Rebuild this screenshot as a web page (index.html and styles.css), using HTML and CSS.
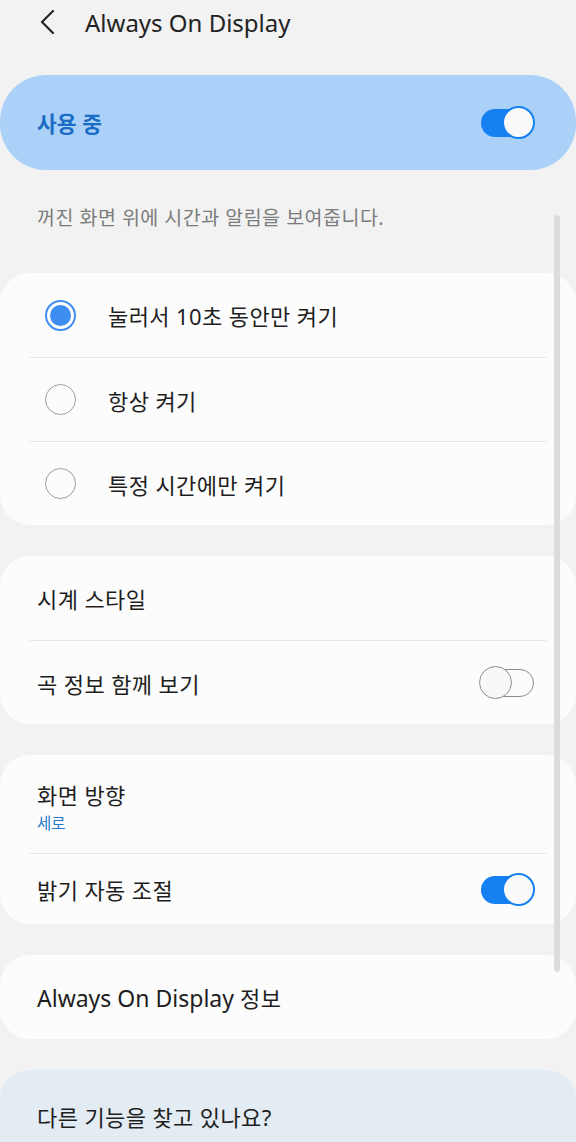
FILE: index.html
```html
<!DOCTYPE html>
<html lang="ko">
    <head>
        <meta charset="UTF-8">
        <meta name="viewport" content="width=device-width,initial-scale=1.0">
        <title>Always On Display</title>
        <link rel="stylesheet" href="styles.css">
    </head>
    <body>
        <div class="screen">
            <div class="header">
                <svg class="back" width="18" height="24" viewBox="0 0 18 24">
                    <path d="M15 1 L4 12 L15 23" fill="none" stroke="#252525" stroke-width="2.2" stroke-linecap="round" stroke-linejoin="round"/>
                </svg>
                <h1>Always On Display</h1>
            </div>

            <div class="master">
                <span class="master-label">사용 중</span>
                <div class="switch on"><span class="thumb"></span></div>
            </div>

            <p class="desc">꺼진 화면 위에 시간과 알림을 보여줍니다.</p>

            <div class="card">
                <div class="row radio-row">
                    <span class="radio checked"></span>
                    <span class="label">눌러서 10초 동안만 켜기</span>
                </div>
                <div class="row radio-row">
                    <span class="radio"></span>
                    <span class="label">항상 켜기</span>
                </div>
                <div class="row radio-row">
                    <span class="radio"></span>
                    <span class="label">특정 시간에만 켜기</span>
                </div>
            </div>

            <div class="card">
                <div class="row">
                    <span class="label">시계 스타일</span>
                </div>
                <div class="row">
                    <span class="label">곡 정보 함께 보기</span>
                    <div class="switch"><span class="thumb"></span></div>
                </div>
            </div>

            <div class="card">
                <div class="row tall">
                    <div class="two-line">
                        <span class="label">화면 방향</span>
                        <span class="sub">세로</span>
                    </div>
                </div>
                <div class="row short">
                    <span class="label">밝기 자동 조절</span>
                    <div class="switch on"><span class="thumb"></span></div>
                </div>
            </div>

            <div class="card">
                <div class="row">
                    <span class="label"><span class="en">Always On Display</span> 정보</span>
                </div>
            </div>

            <div class="card more">
                <div class="row">
                    <span class="label">다른 기능을 찾고 있나요?</span>
                </div>
            </div>

            <div class="scrollbar"></div>
        </div>
    </body>
</html>
```

FILE: styles.css
```css
html, body {
    margin: 0;
    padding: 0;
    height: 1142px;
    overflow: hidden;
}

body {
    font-family: "Noto Sans", "Noto Sans CJK KR", sans-serif;
    background: #f2f2f2;
    color: #1e1e1e;
}

.screen {
    position: relative;
    display: flex;
    flex-direction: column;
}

.header {
    height: 44px;
    display: flex;
    align-items: center;
    padding-left: 38px;
}

.back {
    margin-right: 29px;
}

h1 {
    margin: 0;
    font-size: 24px;
    font-weight: 400;
    color: #232323;
}

.master {
    margin-top: 31px;
    height: 95px;
    border-radius: 46px;
    background: #abd1f8;
    display: flex;
    align-items: center;
    justify-content: space-between;
    padding: 0 41px 0 37px;
}

.master-label {
    font-size: 21.5px;
    font-weight: 700;
    color: #1a6cc4;
}

.desc {
    margin: 0;
    padding: 32px 0 0 37px;
    height: 71px;
    font-size: 19.5px;
    letter-spacing: 0.5px;
    color: #7c7c7c;
}

.card {
    background: #fcfcfc;
    border-radius: 30px;
    margin-bottom: 31px;
}

.row {
    height: 84px;
    margin: 0 30px;
    padding: 0 11px 0 7px;
    display: flex;
    align-items: center;
    justify-content: space-between;
    box-sizing: border-box;
}

.row + .row {
    border-top: 1px solid #e5e5e5;
}

.row.tall {
    height: 98px;
}

.row.short {
    height: 71px;
}

.label {
    font-size: 22px;
    letter-spacing: 0.4px;
}

.label .en {
    font-size: 23px;
    letter-spacing: 0;
}

.two-line {
    display: flex;
    flex-direction: column;
    padding-top: 4px;
}

.sub {
    font-size: 15.5px;
    color: #2377c9;
    margin-top: 1px;
}

.radio-row {
    justify-content: flex-start;
    padding-left: 15px;
}

.radio {
    width: 31px;
    height: 31px;
    border-radius: 50%;
    border: 1.5px solid #9d9d9d;
    box-sizing: border-box;
    margin-right: 32px;
    position: relative;
}

.radio.checked {
    border: 2px solid #3d8ef0;
}

.radio.checked::after {
    content: "";
    position: absolute;
    left: 3px;
    top: 3px;
    width: 21px;
    height: 21px;
    border-radius: 50%;
    background: #3d8ef0;
}

.switch {
    position: relative;
    width: 56px;
    height: 33px;
}

.switch::before {
    content: "";
    position: absolute;
    left: 1px;
    top: 3px;
    width: 54px;
    height: 28px;
    border-radius: 14px;
    border: 1.5px solid #8c8c8c;
    box-sizing: border-box;
}

.switch .thumb {
    position: absolute;
    left: 0;
    top: 0;
    width: 33px;
    height: 33px;
    border-radius: 50%;
    border: 1.5px solid #8c8c8c;
    background: #f8f8f8;
    box-sizing: border-box;
}

.switch.on::before {
    left: 2px;
    width: 46px;
    border: none;
    background: #1580f2;
}

.switch.on .thumb {
    left: auto;
    right: 0;
    border: 2px solid #1580f2;
    background: #fafafa;
}

.more {
    background: #e3ebf3;
    height: 120px;
}

.more .row {
    height: 92px;
}

.scrollbar {
    position: absolute;
    left: 554px;
    top: 215px;
    width: 6px;
    height: 757px;
    border-radius: 3px;
    background: #dcdcdc;
}
```
